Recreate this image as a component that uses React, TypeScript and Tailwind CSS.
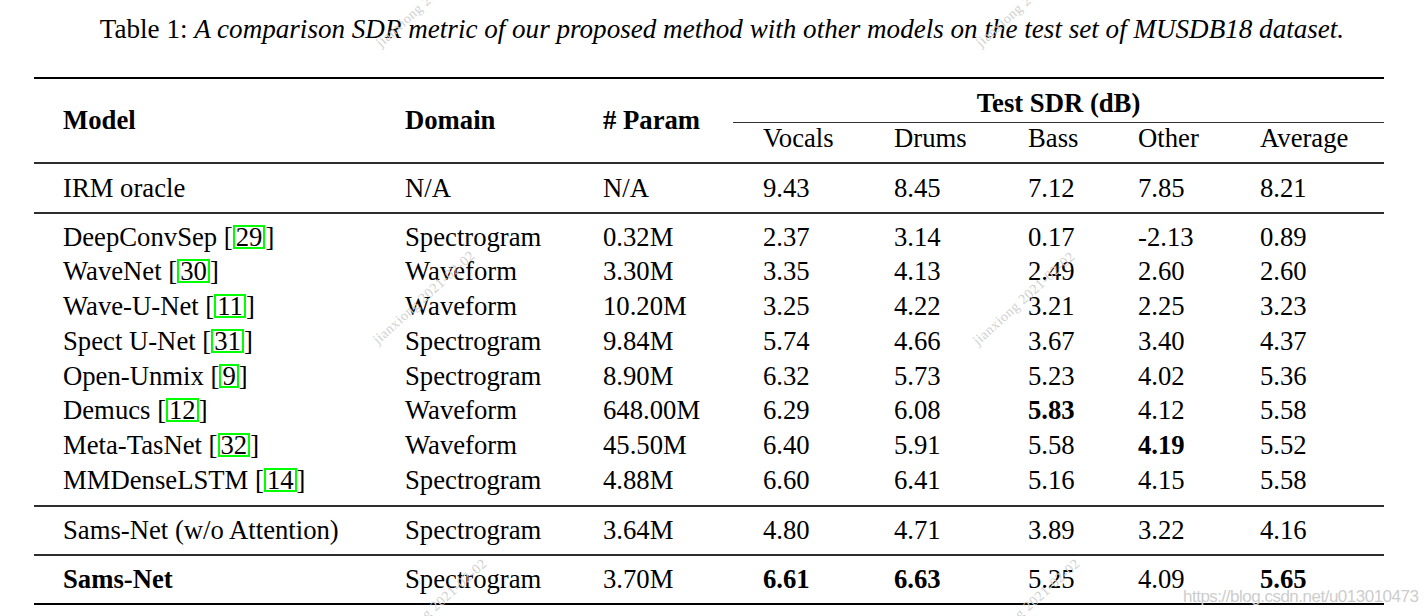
import type { ReactNode } from 'react'

type Row = {
  model: string
  cite?: string
  domain: string
  param: string
  scores: string[]
  bold?: number[]
  boldModel?: boolean
}

const body: Row[] = [
  { model: 'DeepConvSep', cite: '29', domain: 'Spectrogram', param: '0.32M', scores: ['2.37', '3.14', '0.17', '-2.13', '0.89'] },
  { model: 'WaveNet', cite: '30', domain: 'Waveform', param: '3.30M', scores: ['3.35', '4.13', '2.49', '2.60', '2.60'] },
  { model: 'Wave-U-Net', cite: '11', domain: 'Waveform', param: '10.20M', scores: ['3.25', '4.22', '3.21', '2.25', '3.23'] },
  { model: 'Spect U-Net', cite: '31', domain: 'Spectrogram', param: '9.84M', scores: ['5.74', '4.66', '3.67', '3.40', '4.37'] },
  { model: 'Open-Unmix', cite: '9', domain: 'Spectrogram', param: '8.90M', scores: ['6.32', '5.73', '5.23', '4.02', '5.36'] },
  { model: 'Demucs', cite: '12', domain: 'Waveform', param: '648.00M', scores: ['6.29', '6.08', '5.83', '4.12', '5.58'], bold: [2] },
  { model: 'Meta-TasNet', cite: '32', domain: 'Waveform', param: '45.50M', scores: ['6.40', '5.91', '5.58', '4.19', '5.52'], bold: [3] },
  { model: 'MMDenseLSTM', cite: '14', domain: 'Spectrogram', param: '4.88M', scores: ['6.60', '6.41', '5.16', '4.15', '5.58'] },
]

const cols = 'grid grid-cols-[371px_198px_130px_131px_134px_110px_122px_154px]'

function Cite({ n }: { n: string }) {
  return (
    <>
      {' '}[
      <span className="inline-block border-2 border-[#00ff00] px-px leading-[20px]">{n}</span>]
    </>
  )
}

function DataRow({ row, tall }: { row: Row; tall?: boolean }) {
  return (
    <div className={`${cols} ${tall ? 'leading-[34.7px]' : 'leading-[34.5px]'}`}>
      <div className={`pl-[29px] ${row.boldModel ? 'font-bold' : ''}`}>
        {row.model}
        {row.cite && <Cite n={row.cite} />}
      </div>
      <div>{row.domain}</div>
      <div>{row.param}</div>
      {row.scores.map((s, i) => (
        <div key={i} className={`pl-[30px] ${row.bold?.includes(i) ? 'font-bold' : ''}`}>
          {s}
        </div>
      ))}
    </div>
  )
}

function Midrule() {
  return <div className="h-[2px] bg-[#2e2e2e]" />
}

function Mark({ x, y, children }: { x: number; y: number; children: ReactNode }) {
  // faint diagonal watermark, anchored at its bottom-left corner
  return (
    <span
      className="pointer-events-none absolute origin-bottom-left -rotate-[42deg] whitespace-nowrap text-[14px] leading-[14px] tracking-[0.5px] text-[#cfcfcf]"
      style={{ left: x, top: y - 14 }}
    >
      {children}
    </span>
  )
}

export default function App() {
  return (
    <div className="relative h-[616px] w-[1427px] overflow-hidden bg-white text-[26.7px] text-black font-['Liberation_Serif','Times_New_Roman',serif]">
      {/* caption */}
      <p className="pl-[17px] pt-[12px] text-center text-[27.1px] leading-[34.5px]">
        Table 1: <i>A comparison SDR metric of our proposed method with other models on the test set of MUSDB18 dataset.</i>
      </p>

      <div className="ml-[34px] mt-[30.5px] w-[1350px]">
        <div className="h-[2px] bg-black" />

        {/* header */}
        <div className="grid h-[83px] grid-cols-[371px_198px_130px_651px] font-bold">
          <div className="pl-[29px] pt-[24px] leading-[34.5px]">Model</div>
          <div className="pt-[24px] leading-[34.5px]">Domain</div>
          <div className="pt-[24px] leading-[34.5px]"># Param</div>
          <div className="flex flex-col">
            <div className="pt-[7px] text-center leading-[34.5px]">Test SDR (dB)</div>
            <div className="mt-[1.5px] h-px bg-[#333]" />
            <div className="grid grid-cols-[131px_134px_110px_122px_154px] font-normal leading-[30px]">
              <div className="pl-[30px]">Vocals</div>
              <div className="pl-[30px]">Drums</div>
              <div className="pl-[30px]">Bass</div>
              <div className="pl-[30px]">Other</div>
              <div className="pl-[30px]">Average</div>
            </div>
          </div>
        </div>
        <Midrule />

        <div className="pb-[6.5px] pt-[7px]">
          <DataRow row={{ model: 'IRM oracle', domain: 'N/A', param: 'N/A', scores: ['9.43', '8.45', '7.12', '7.85', '8.21'] }} />
        </div>
        <Midrule />

        <div className="pb-[7.4px] pt-[5.7px]">
          {body.map((r) => (
            <DataRow key={r.model} row={r} tall />
          ))}
        </div>
        <Midrule />

        <div className="pb-[6.5px] pt-[6.3px]">
          <DataRow row={{ model: 'Sams-Net (w/o Attention)', domain: 'Spectrogram', param: '3.64M', scores: ['4.80', '4.71', '3.89', '3.22', '4.16'] }} />
        </div>
        <Midrule />

        <div className="pb-[6.5px] pt-[6px]">
          <DataRow
            row={{ model: 'Sams-Net', boldModel: true, domain: 'Spectrogram', param: '3.70M', scores: ['6.61', '6.63', '5.25', '4.09', '5.65'], bold: [0, 1, 4] }}
          />
        </div>
        <div className="h-[2px] bg-black" />
      </div>

      {/* watermarks */}
      <Mark x={383} y={50}>jianxiong 2021-02-02</Mark>
      <Mark x={983} y={50}>jianxiong 2021-02-02</Mark>
      <Mark x={380} y={347}>jianxiong 2021-02-02</Mark>
      <Mark x={980} y={348}>jianxiong 2021-02-02</Mark>
      <Mark x={392} y={655}>jianxiong 2021-02-02</Mark>
      <Mark x={985} y={655}>jianxiong 2021-02-02</Mark>

      <span className="absolute left-[1183px] top-[588px] text-[17px] leading-[17px] tracking-[-0.5px] text-[#cdcdcd] font-['Liberation_Sans',Arial,sans-serif]">
        https://blog.csdn.net/u013010473
      </span>
    </div>
  )
}
